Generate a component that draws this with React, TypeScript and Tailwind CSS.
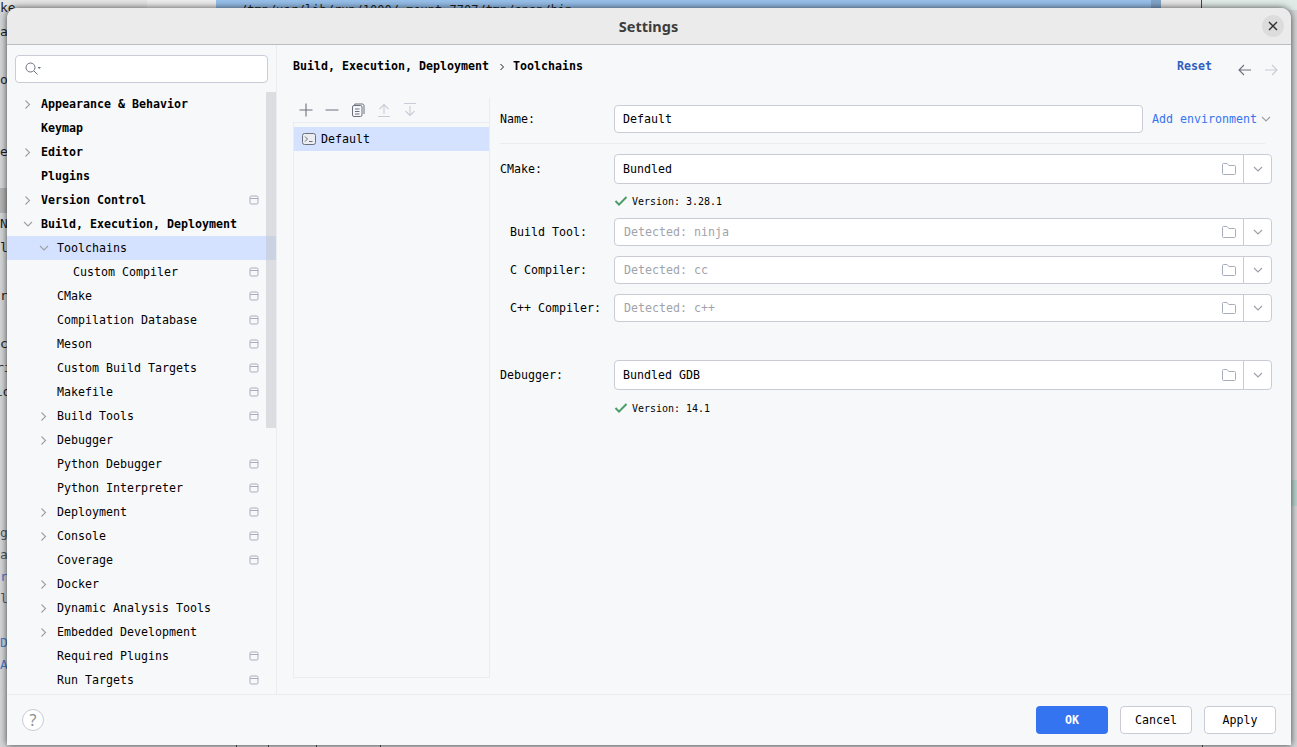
import React from "react";

const treeRows: { label: string; level: number; arrow?: "right" | "down"; bold?: boolean; project?: boolean; selected?: boolean }[] = [
  { label: "Appearance & Behavior", level: 0, arrow: "right", bold: true },
  { label: "Keymap", level: 0, bold: true },
  { label: "Editor", level: 0, arrow: "right", bold: true },
  { label: "Plugins", level: 0, bold: true },
  { label: "Version Control", level: 0, arrow: "right", bold: true, project: true },
  { label: "Build, Execution, Deployment", level: 0, arrow: "down", bold: true },
  { label: "Toolchains", level: 1, arrow: "down", selected: true },
  { label: "Custom Compiler", level: 2, project: true },
  { label: "CMake", level: 1, project: true },
  { label: "Compilation Database", level: 1, project: true },
  { label: "Meson", level: 1, project: true },
  { label: "Custom Build Targets", level: 1, project: true },
  { label: "Makefile", level: 1, project: true },
  { label: "Build Tools", level: 1, arrow: "right", project: true },
  { label: "Debugger", level: 1, arrow: "right" },
  { label: "Python Debugger", level: 1, project: true },
  { label: "Python Interpreter", level: 1, project: true },
  { label: "Deployment", level: 1, arrow: "right", project: true },
  { label: "Console", level: 1, arrow: "right", project: true },
  { label: "Coverage", level: 1, project: true },
  { label: "Docker", level: 1, arrow: "right" },
  { label: "Dynamic Analysis Tools", level: 1, arrow: "right" },
  { label: "Embedded Development", level: 1, arrow: "right" },
  { label: "Required Plugins", level: 1, project: true },
  { label: "Run Targets", level: 1, project: true },
];

const backdropLetters: { text: string; className: string }[] = [
  { text: "ke", className: "left-0 top-[0px] text-[#1e1f22]" },
  { text: "a", className: "left-0 top-[24px] text-[#1e1f22]" },
  { text: "o", className: "left-0 top-[72px] text-[#1e1f22]" },
  { text: "e", className: "left-0 top-[144px] text-[#1e1f22]" },
  { text: "N", className: "left-0 top-[216px] text-[#1e1f22]" },
  { text: "l", className: "left-0 top-[240px] text-[#1e1f22]" },
  { text: "r", className: "left-0 top-[288px] text-[#1e1f22]" },
  { text: "c", className: "left-0 top-[336px] text-[#1e1f22]" },
  { text: "ri", className: "-left-[4px] top-[360px] text-[#1e1f22]" },
  { text: "io", className: "-left-[5px] top-[384px] text-[#1e1f22]" },
  { text: "g", className: "left-0 top-[525px] text-[#555]" },
  { text: "a", className: "left-0 top-[547px] text-[#555]" },
  { text: "r", className: "left-0 top-[569px] text-[#4a78c8]" },
  { text: "l", className: "left-0 top-[591px] text-[#555]" },
  { text: "D", className: "left-0 top-[635px] text-[#4a78c8]" },
  { text: "A", className: "left-0 top-[657px] text-[#4a78c8]" },
];

function Chevron({ dir, className = "" }: { dir: "right" | "down"; className?: string }) {
  return (
    <svg width="10" height="16" viewBox="0 0 10 16" fill="none" stroke="#9da0a8" strokeWidth="1.1" className={className}>
      {dir === "right" ? <path d="M2.5 4.5 L6.5 8.5 L2.5 12.5" /> : <path d="M1 6.5 L5 10.5 L9 6.5" transform="translate(0 -0.5)" />}
    </svg>
  );
}

function ProjectIcon() {
  return (
    <svg width="10" height="10" viewBox="0 0 10 10" fill="none" stroke="#a8adbd" strokeWidth="1">
      <rect x="1" y="1" width="8" height="8" rx="1.2" />
      <path d="M1 3.5 H9" />
    </svg>
  );
}

function TreeRow({ row }: { row: (typeof treeRows)[number] }) {
  return (
    <div className={`flex h-6 items-center pr-[17px] ${row.selected ? "bg-[#d4e2ff]" : ""}`}>
      <div className={`flex items-center ${row.level === 0 ? "pl-[16px]" : row.level === 1 ? "pl-[32px]" : "pl-[48px]"}`}>
        <span className="mr-[8px] flex w-[10px] justify-center">{row.arrow && <Chevron dir={row.arrow} />}</span>
        <span className={`whitespace-pre pt-[2px] text-[#000] ${row.bold ? "font-bold" : ""}`}>{row.label}</span>
      </div>
      {row.project && (
        <span className="ml-auto flex">
          <ProjectIcon />
        </span>
      )}
    </div>
  );
}

function FolderIcon() {
  return (
    <svg width="16" height="16" viewBox="0 0 16 16" fill="none" stroke="#a8adbd" strokeWidth="1">
      <path d="M1.5 3.5 C1.5 2.9 1.9 2.5 2.5 2.5 H6 L7.8 4.5 H13.5 C14.1 4.5 14.5 4.9 14.5 5.5 V12.5 C14.5 13.1 14.1 13.5 13.5 13.5 H2.5 C1.9 13.5 1.5 13.1 1.5 12.5 Z" />
    </svg>
  );
}

function ComboField({ text, placeholder, tall }: { text: string; placeholder?: boolean; tall?: boolean }) {
  return (
    <div className={`flex flex-1 items-center rounded-[4px] border border-[#c9ccd6] bg-white ${tall ? "h-[30px]" : "h-[28px]"}`}>
      <span className={`flex-1 whitespace-pre pt-[2px] ${placeholder ? "pl-[9px] text-[#a0a3ab]" : "pl-[8px] text-[#000]"}`}>{text}</span>
      <span className="mr-[6px] flex">
        <FolderIcon />
      </span>
      <span className="flex h-full w-[28px] items-center justify-center border-l border-[#c9ccd6]">
        <Chevron dir="down" />
      </span>
    </div>
  );
}

function FormRow({ label, indent, className = "", children }: { label: string; indent?: boolean; className?: string; children: React.ReactNode }) {
  return (
    <div className={`flex items-center ${className}`}>
      <span className={`w-[114px] shrink-0 whitespace-pre pt-[2px] text-[#000] ${indent ? "pl-[10px]" : ""}`}>{label}</span>
      {children}
    </div>
  );
}

function VersionRow({ text, className = "mt-[8px]" }: { text: string; className?: string }) {
  return (
    <div className={`flex h-[18px] items-center pl-[114px] ${className}`}>
      <svg width="14" height="12" viewBox="0 0 14 12" fill="none" stroke="#4a9c68" strokeWidth="2">
        <path d="M1.5 6 L5 9.6 L12.5 2" />
      </svg>
      <span className="ml-[4px] pt-[2px] text-[9.97px] text-[#000]">{text}</span>
    </div>
  );
}

export default function App() {
  return (
    <div className="relative h-[747px] w-[1297px] overflow-hidden bg-[#d4d5d7] text-[11.63px] [font-family:'DejaVu_Sans_Mono',monospace]">
      {/* window behind the dialog */}
      <div className="flex h-[10px]">
        <div className="w-[147px] bg-[#e4e4e4]" />
        <div className="w-[69px] bg-[#ececec]" />
        <div className="w-[935px] overflow-hidden whitespace-pre bg-[#96bfe9] pl-[24px] pt-[4px] text-[12px] leading-[12px] text-[#1e1f22]">
          /tmp/usr/lib/run/1000/.mount_7707/tmp/snap/bin
        </div>
        <div className="w-[10px] bg-[#82a4c8]" />
        <div className="w-[41px] border-r border-[#44464a] bg-[#e6e6e6]" />
        <div className="flex-1 bg-[#dfeae6]" />
      </div>
      <div className="absolute left-0 top-[188px] h-[25px] w-[8px] bg-[#b4b4b4]" />
      <div className="absolute bottom-0 left-[236px] h-[3px] w-[1px] bg-[#555]" />
      <div className="absolute bottom-0 left-[268px] h-[3px] w-[1px] bg-[#555]" />
      <div className="absolute bottom-0 left-[316px] h-[3px] w-[1px] bg-[#555]" />
      <div className="absolute bottom-0 left-[380px] h-[3px] w-[1px] bg-[#555]" />
      <div className="absolute bottom-0 left-[1202px] h-[3px] w-[1px] bg-[#555]" />
      <div className="absolute right-0 top-[480px] h-[26px] w-[6px] bg-[#b9d3cf]" />
      {backdropLetters.map((l, i) => (
        <span key={i} className={`absolute text-[13px] leading-[16px] ${l.className}`}>
          {l.text}
        </span>
      ))}

      {/* dialog */}
      <div className="absolute left-[7px] top-[8px] flex h-[737px] w-[1284px] flex-col overflow-hidden rounded-t-[10px] bg-[#f7f8fa] shadow-[0_0_7px_rgba(0,0,0,0.7)]">
        <div className="flex h-[37px] shrink-0 items-center justify-center border-b border-[#bdbdbd] bg-[#ebebeb]">
          <span className="ml-[-1px] pt-[2px] text-[14.5px] font-bold text-[#3d3d3d] [font-family:'Noto_Sans',sans-serif]">Settings</span>
          <span className="absolute right-[7px] top-[7px] flex h-[22px] w-[22px] items-center justify-center rounded-full bg-[#dcdcdc]">
            <svg width="10" height="10" viewBox="0 0 10 10" stroke="#2f2f2f" strokeWidth="1.4">
              <path d="M1 1 L9 9 M9 1 L1 9" />
            </svg>
          </span>
        </div>

        <div className="flex min-h-0 flex-1">
          {/* sidebar */}
          <div className="relative flex w-[270px] shrink-0 flex-col overflow-hidden border-r border-[#ebecf0]">
            <div className="mx-[8px] mb-[9px] mt-[10px] flex h-[28px] w-[253px] shrink-0 items-center rounded-[4px] border border-[#c9ccd6] bg-white pl-[8px]">
              <svg width="18" height="16" viewBox="0 0 18 16" fill="none" stroke="#6c707e" strokeWidth="1">
                <circle cx="6.5" cy="6.5" r="4.5" />
                <path d="M10 10 L13.5 13.5" />
                <path d="M13.5 6 H17 L15.25 8 Z" fill="#6c707e" stroke="none" />
              </svg>
            </div>
            <div className="flex flex-col">
              {treeRows.map((r) => (
                <TreeRow key={r.label} row={r} />
              ))}
            </div>
            <div className="absolute right-0 top-[47px] h-[336px] w-[10px] bg-[#c0c2c8]/50" />
          </div>

          {/* main */}
          <div className="flex min-w-0 flex-1 flex-col pb-[16px] pl-[16px] pr-[19px]">
            <div className="flex h-[43px] shrink-0 items-center">
              <span className="whitespace-pre pt-[1px] font-bold text-[#000]">Build, Execution, Deployment</span>
              <svg width="10" height="10" viewBox="0 0 10 10" fill="none" stroke="#1e1f22" strokeWidth="1" className="ml-[8px] mr-[6px] mt-[1px]">
                <path d="M3.5 2 L6.5 5 L3.5 8" />
              </svg>
              <span className="pt-[1px] font-bold text-[#000]">Toolchains</span>
              <span className="ml-auto mr-[60px] pt-[1px] font-bold text-[#315fbd]">Reset</span>
              <svg width="16" height="16" viewBox="0 0 16 16" fill="none" stroke="#6c707e" strokeWidth="1.1" className="absolute right-[38px] top-[54px]">
                <path d="M14 8 H2 M7 3 L2 8 L7 13" />
              </svg>
              <svg width="16" height="16" viewBox="0 0 16 16" fill="none" stroke="#c9ccd6" strokeWidth="1.1" className="absolute right-[12px] top-[54px]">
                <path d="M2 8 H14 M9 3 L14 8 L9 13" />
              </svg>
            </div>

            <div className="mt-[10px] flex min-h-0 flex-1">
              {/* toolchain list */}
              <div className="flex w-[197px] shrink-0 flex-col border-r border-[#ebecf0]">
                <div className="flex h-[24px] shrink-0 items-center gap-[10px] pl-[5px]">
                  <svg width="16" height="16" viewBox="0 0 16 16" fill="none" stroke="#6c707e" strokeWidth="1.1">
                    <path d="M8 1.5 V14.5 M1.5 8 H14.5" />
                  </svg>
                  <svg width="16" height="16" viewBox="0 0 16 16" fill="none" stroke="#6c707e" strokeWidth="1.1">
                    <path d="M1.5 8 H14.5" />
                  </svg>
                  <svg width="16" height="16" viewBox="0 0 16 16" fill="none" stroke="#6c707e" strokeWidth="1">
                    <rect x="2.5" y="3.5" width="9.5" height="11" rx="1.5" />
                    <path d="M4.8 3 V2 H12.5 C13.3 2 14 2.7 14 3.5 V12 M5 7 H9.5 M5 9.5 H9.5 M5 12 H9.5" />
                  </svg>
                  <svg width="16" height="16" viewBox="0 0 16 16" fill="none" stroke="#c9ccd6" strokeWidth="1.1">
                    <path d="M2 14.5 H14 M8 12 V2.5 M3.5 7 L8 2.5 L12.5 7" />
                  </svg>
                  <svg width="16" height="16" viewBox="0 0 16 16" fill="none" stroke="#c9ccd6" strokeWidth="1.1">
                    <path d="M2 1.5 H14 M8 4 V13.5 M3.5 9 L8 13.5 L12.5 9" />
                  </svg>
                </div>
                <div className="flex-1 border-b border-l border-t border-[#ebecf0] pt-[4px]">
                  <div className="flex h-[24px] items-center bg-[#d4e2ff] pl-[8px]">
                    <svg width="14" height="14" viewBox="0 0 14 14" fill="#ebecf0" stroke="#6c707e" strokeWidth="1">
                      <rect x="0.5" y="1.5" width="13" height="11" rx="2" />
                      <path d="M3 4.5 L5.5 7 L3 9.5 M7 9.5 H10.5" fill="none" />
                    </svg>
                    <span className="ml-[5px] pt-[2px] text-[#000]">Default</span>
                  </div>
                </div>
              </div>

              {/* form */}
              <div className="flex min-w-0 flex-1 flex-col pl-[10px]">
                <FormRow label="Name:" className="mt-[7px]">
                  <div className="flex h-[28px] w-[529px] items-center rounded-[4px] border border-[#c9ccd6] bg-white pl-[8px] pt-[2px] text-[#000]">Default</div>
                  <span className="ml-[9px] whitespace-pre pt-[2px] text-[#3574f0]">Add environment</span>
                  <Chevron dir="down" className="ml-[4px]" />
                </FormRow>
                <div className="mr-[7px] mt-[10px] h-px shrink-0 bg-[#ebecf0]" />
                <FormRow label="CMake:" className="mt-[10px]">
                  <ComboField text="Bundled" tall />
                </FormRow>
                <VersionRow text="Version: 3.28.1" />
                <FormRow label="Build Tool:" indent className="mt-[8px]">
                  <ComboField text="Detected: ninja" placeholder />
                </FormRow>
                <FormRow label="C Compiler:" indent className="mt-[10px]">
                  <ComboField text="Detected: cc" placeholder />
                </FormRow>
                <FormRow label="C++ Compiler:" indent className="mt-[10px]">
                  <ComboField text="Detected: c++" placeholder />
                </FormRow>
                <FormRow label="Debugger:" className="mt-[38px]">
                  <ComboField text="Bundled GDB" tall />
                </FormRow>
                <VersionRow text="Version: 14.1" className="mt-[9px]" />
              </div>
            </div>
          </div>
        </div>

        {/* footer */}
        <div className="flex h-[51px] shrink-0 items-center border-t border-[#ebecf0] pl-[15px] pr-[15px]">
          <span className="flex h-[22px] w-[22px] items-center justify-center rounded-full border border-[#c9ccd6] bg-white text-[16px] text-[#8c8f98] [font-family:'Noto_Sans',sans-serif]">?</span>
          <div className="ml-auto flex gap-[12px]">
            <button className="h-[28px] w-[72px] rounded-[4px] bg-[#3574f0] pt-[2px] font-bold text-white">OK</button>
            <button className="h-[28px] w-[72px] rounded-[4px] border border-[#c9ccd6] bg-white pt-[2px] text-[#000]">Cancel</button>
            <button className="h-[28px] w-[72px] rounded-[4px] border border-[#c9ccd6] bg-white pt-[2px] text-[#000]">Apply</button>
          </div>
        </div>
      </div>
    </div>
  );
}
